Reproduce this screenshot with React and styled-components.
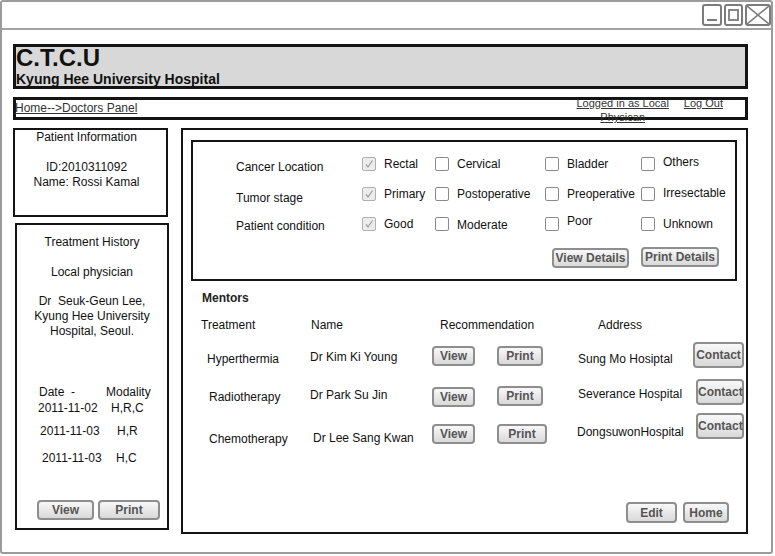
import React from 'react';
import styled, { createGlobalStyle } from 'styled-components';

const Global = createGlobalStyle`
  body {
    margin: 0;
    background: #fff;
    font-family: "Liberation Sans", Arial, sans-serif;
    color: #111;
  }
`;

const Window = styled.div`
  width: 773px;
  height: 554px;
  box-sizing: border-box;
  border: 2px solid #9b9b9b;
  border-radius: 3px;
  display: flex;
  flex-direction: column;
  background: #fff;
`;

const TitleBar = styled.div`
  height: 26px;
  border-bottom: 2px solid #a3a3a3;
  display: flex;
  justify-content: flex-end;
  align-items: center;
  gap: 2px;
`;

const Control = styled.div`
  width: ${p => p.$w}px;
  height: 22px;
  box-sizing: border-box;
  border: 2px solid #7c7c7c;
  border-radius: 3px;
  display: flex;
  align-items: center;
  justify-content: center;
  svg { display: block; }
`;

const Content = styled.div`
  flex: 1;
  padding: 14px 23px 0 11px;
  display: flex;
  flex-direction: column;
`;

const Header = styled.header`
  height: 45px;
  box-sizing: border-box;
  border: 3px solid #141414;
  background: #d8d8d8;
  display: flex;
  flex-direction: column;
`;

const Title = styled.div`
  font-size: 24px;
  font-weight: bold;
  line-height: 22px;
`;

const Subtitle = styled.div`
  font-size: 14px;
  font-weight: bold;
  line-height: 16px;
  margin-top: 2px;
`;

const Nav = styled.nav`
  margin-top: 8px;
  height: 23px;
  box-sizing: border-box;
  border: 3px solid #141414;
  display: flex;
  justify-content: space-between;
  align-items: flex-start;
  padding-right: 22px;
`;

const Crumbs = styled.a`
  font-size: 12px;
  line-height: 17px;
  color: #333;
  text-decoration: underline;
  margin-left: -1px;
`;

const UserLinks = styled.div`
  display: flex;
  gap: 15px;
  margin-top: -4px;
  font-size: 11px;
  line-height: 14px;
  a {
    color: #333;
    text-decoration: underline;
  }
`;

const Logged = styled.a`
  text-align: center;
  white-space: nowrap;
`;

const Body = styled.div`
  margin-top: 8px;
  display: flex;
  gap: 12px;
  height: 406px;
`;

const LeftCol = styled.div`
  width: 156px;
  flex: none;
  display: flex;
  flex-direction: column;
`;

const PatientBox = styled.section`
  width: 155px;
  height: 89px;
  box-sizing: border-box;
  border: 2px solid #141414;
  text-align: center;
  font-size: 12px;
  line-height: 15px;
  padding-right: 8px;
`;

const BoxTitle = styled.div`
  line-height: 14px;
  margin-bottom: ${p => p.$mb || 0}px;
`;

const HistoryBox = styled.section`
  margin: 6px 0 0 2px;
  width: 154px;
  height: 307px;
  box-sizing: border-box;
  border: 2px solid #141414;
  padding: 10px 0 8px;
  text-align: center;
  font-size: 12px;
  line-height: 15px;
  display: flex;
  flex-direction: column;
`;

const Para = styled.div`
  margin-top: ${p => p.$mt}px;
`;

const DateTable = styled.div`
  margin-top: 46px;
  display: grid;
  grid-template-columns: 72px 1fr;
  grid-template-rows: 14px 18px 28px 26px;
  align-items: center;
  text-align: left;
  padding-left: 22px;
`;

const DateCell = styled.span`
  transform: translateX(${p => p.$dx || 0}px);
`;

const BtnRow = styled.div`
  margin-top: auto;
  display: flex;
  gap: 4px;
  padding-left: 20px;
`;

const Btn = styled.button`
  width: ${p => p.$w}px;
  height: ${p => p.$h || 20}px;
  box-sizing: border-box;
  padding: 0;
  border: 2px solid #8e8e8e;
  border-radius: 4px;
  background: linear-gradient(#f8f8f8, #d9d9d9);
  font-family: "Liberation Sans", Arial, sans-serif;
  font-size: ${p => p.$fs || 12}px;
  font-weight: bold;
  color: #555;
  line-height: 1;
  white-space: nowrap;
  overflow: visible;
  transform: translate(${p => p.$dx || 0}px, ${p => p.$dy || 0}px);
`;

const Main = styled.main`
  flex: 1;
  min-width: 0;
  box-sizing: border-box;
  border: 2px solid #141414;
  padding: 10px 9px 9px 8px;
  display: flex;
  flex-direction: column;
`;

const Criteria = styled.section`
  height: 141px;
  box-sizing: border-box;
  border: 2px solid #141414;
  padding: 8px 16px 0 0;
  display: flex;
  flex-direction: column;
`;

const CritGrid = styled.div`
  display: grid;
  grid-template-columns: 126px 73px 110px 96px 1fr;
  grid-template-rows: 28px 28px 28px;
  row-gap: 2px;
  padding-left: 43px;
  align-items: center;
  font-size: 12px;
`;

const CritLabel = styled.span`
  transform: translateY(${p => p.$dy || 0}px);
`;

const Option = styled.label`
  display: flex;
  align-items: center;
  gap: 8px;
  span:last-child {
    transform: translateY(${p => p.$dy || 0}px);
  }
`;

const Box = styled.span`
  width: 14px;
  height: 14px;
  flex: none;
  box-sizing: border-box;
  border: 1.5px solid ${p => (p.$on ? '#b0b0b0' : '#8a8a8a')};
  border-radius: 2px;
  background: ${p => (p.$on ? '#ececec' : '#fff')};
  display: flex;
  align-items: center;
  justify-content: center;
`;

const DetailRow = styled.div`
  margin-top: 10px;
  display: flex;
  justify-content: flex-end;
  gap: 12px;
`;

const MentorsTitle = styled.div`
  margin: 10px 0 0 11px;
  font-size: 12px;
  font-weight: bold;
  line-height: 14px;
  color: #222;
`;

const MentorGrid = styled.div`
  margin-top: 13px;
  padding-left: 10px;
  display: grid;
  grid-template-columns: 109px 122px 65px 81px 115px 1fr;
  grid-template-rows: 18px 40px 38px 38px;
  align-items: center;
  font-size: 12px;
`;

const Cell = styled.span`
  grid-column: ${p => p.$span || 'auto'};
  align-self: ${p => (p.$head ? 'start' : 'center')};
  line-height: 14px;
  white-space: nowrap;
  transform: translate(${p => p.$dx || 0}px, ${p => p.$dy || 0}px);
`;

const Footer = styled.div`
  margin-top: auto;
  display: flex;
  justify-content: flex-end;
  gap: 6px;
  padding-right: 8px;
`;

const Check = () => (
  <svg width="10" height="10" viewBox="0 0 10 10">
    <polyline points="2,5.5 4,8 8.5,1.5" fill="none" stroke="#a0a0a0" strokeWidth="1.3" />
  </svg>
);

const criteria = [
  { label: 'Cancer Location', dy: 3, opts: [['Rectal', true, 0], ['Cervical', false, 0], ['Bladder', false, 0], ['Others', false, -2]] },
  { label: 'Tumor stage', dy: 4, opts: [['Primary', true, 0], ['Postoperative', false, 0], ['Preoperative', false, 0], ['Irresectable', false, -1]] },
  { label: 'Patient condition', dy: 2, opts: [['Good', true, 0], ['Moderate', false, 1], ['Poor', false, -3], ['Unknown', false, 0]] },
];

const mentors = [
  { t: 'Hyperthermia', n: 'Dr Kim Ki Young', a: 'Sung Mo Hosiptal', tx: 6, ty: 3, nx: 0, ny: 1, vy: 0, py: 0, pw: 46, ay: 3, ax: 0, cx: 0, cw: 51, cy: -1 },
  { t: 'Radiotherapy', n: 'Dr Park Su Jin', a: 'Severance Hospital', tx: 8, ty: 2, nx: 0, ny: 0, vy: 2, py: 1, pw: 46, ay: -1, ax: 0, cx: 3, cw: 48, cy: -3 },
  { t: 'Chemotherapy', n: 'Dr Lee Sang Kwan', a: 'DongsuwonHospital', tx: 8, ty: 6, nx: 3, ny: 5, vy: 1, py: 1, pw: 50, ay: -1, ax: -1, cx: 3, cw: 48, cy: -7 },
];

const App = () => {
  return (
    <>
      <Global />
      <Window>
        <TitleBar>
          <Control $w={20}>
            <svg width="16" height="18" viewBox="0 0 16 18">
              <line x1="3" y1="14" x2="13" y2="14" stroke="#7c7c7c" strokeWidth="2" />
            </svg>
          </Control>
          <Control $w={19}>
            <svg width="15" height="18" viewBox="0 0 15 18">
              <rect x="3" y="4" width="9" height="10" fill="none" stroke="#7c7c7c" strokeWidth="1.8" />
            </svg>
          </Control>
          <Control $w={26}>
            <svg width="22" height="18" viewBox="0 0 22 18">
              <line x1="0" y1="0" x2="22" y2="18" stroke="#7c7c7c" strokeWidth="1.6" />
              <line x1="22" y1="0" x2="0" y2="18" stroke="#7c7c7c" strokeWidth="1.6" />
            </svg>
          </Control>
        </TitleBar>
        <Content>
          <Header>
            <Title>C.T.C.U</Title>
            <Subtitle>Kyung Hee University Hospital</Subtitle>
          </Header>
          <Nav>
            <Crumbs>Home--&gt;Doctors Panel</Crumbs>
            <UserLinks>
              <Logged>Logged in as Local<br />Physican</Logged>
              <a>Log Out</a>
            </UserLinks>
          </Nav>
          <Body>
            <LeftCol>
              <PatientBox>
                <BoxTitle $mb={16}>Patient Information</BoxTitle>
                <div>ID:2010311092</div>
                <div>Name: Rossi Kamal</div>
              </PatientBox>
              <HistoryBox>
                <BoxTitle>Treatment History</BoxTitle>
                <Para $mt={16}>Local physician</Para>
                <Para $mt={14}>
                  Dr&nbsp; Seuk-Geun Lee,<br />
                  Kyung Hee University<br />
                  Hospital, Seoul.
                </Para>
                <DateTable>
                  <DateCell>Date&nbsp; -</DateCell>
                  <DateCell $dx={-5}>Modality</DateCell>
                  <DateCell $dx={-1}>2011-11-02</DateCell>
                  <DateCell>H,R,C</DateCell>
                  <DateCell $dx={1}>2011-11-03</DateCell>
                  <DateCell $dx={6}>H,R</DateCell>
                  <DateCell $dx={3}>2011-11-03</DateCell>
                  <DateCell $dx={5}>H,C</DateCell>
                </DateTable>
                <BtnRow>
                  <Btn $w={57}>View</Btn>
                  <Btn $w={62}>Print</Btn>
                </BtnRow>
              </HistoryBox>
            </LeftCol>
            <Main>
              <Criteria>
                <CritGrid>
                  {criteria.map(row => (
                    <React.Fragment key={row.label}>
                      <CritLabel $dy={row.dy}>{row.label}</CritLabel>
                      {row.opts.map(([name, on, dy]) => (
                        <Option key={name} $dy={dy}>
                          <Box $on={on}>{on && <Check />}</Box>
                          <span>{name}</span>
                        </Option>
                      ))}
                    </React.Fragment>
                  ))}
                </CritGrid>
                <DetailRow>
                  <Btn $w={77}>View Details</Btn>
                  <Btn $w={78} $dy={-1}>Print Details</Btn>
                </DetailRow>
              </Criteria>
              <MentorsTitle>Mentors</MentorsTitle>
              <MentorGrid>
                <Cell $head>Treatment</Cell>
                <Cell $head $dx={1}>Name</Cell>
                <Cell $head $span="span 2" $dx={8}>Recommendation</Cell>
                <Cell $head $span="span 2" $dx={20}>Address</Cell>
                {mentors.map(m => (
                  <React.Fragment key={m.t}>
                    <Cell $dx={m.tx} $dy={m.ty}>{m.t}</Cell>
                    <Cell $dx={m.nx} $dy={m.ny}>{m.n}</Cell>
                    <Btn $w={43} $dy={m.vy}>View</Btn>
                    <Btn $w={m.pw} $dy={m.py}>Print</Btn>
                    <Cell $dx={m.ax} $dy={m.ay}>{m.a}</Cell>
                    <Btn $w={m.cw} $h={26} $fs={12} $dx={m.cx} $dy={m.cy}>Contact</Btn>
                  </React.Fragment>
                ))}
              </MentorGrid>
              <Footer>
                <Btn $w={51} $h={21}>Edit</Btn>
                <Btn $w={46} $h={21}>Home</Btn>
              </Footer>
            </Main>
          </Body>
        </Content>
      </Window>
    </>
  );
};

export default App;
